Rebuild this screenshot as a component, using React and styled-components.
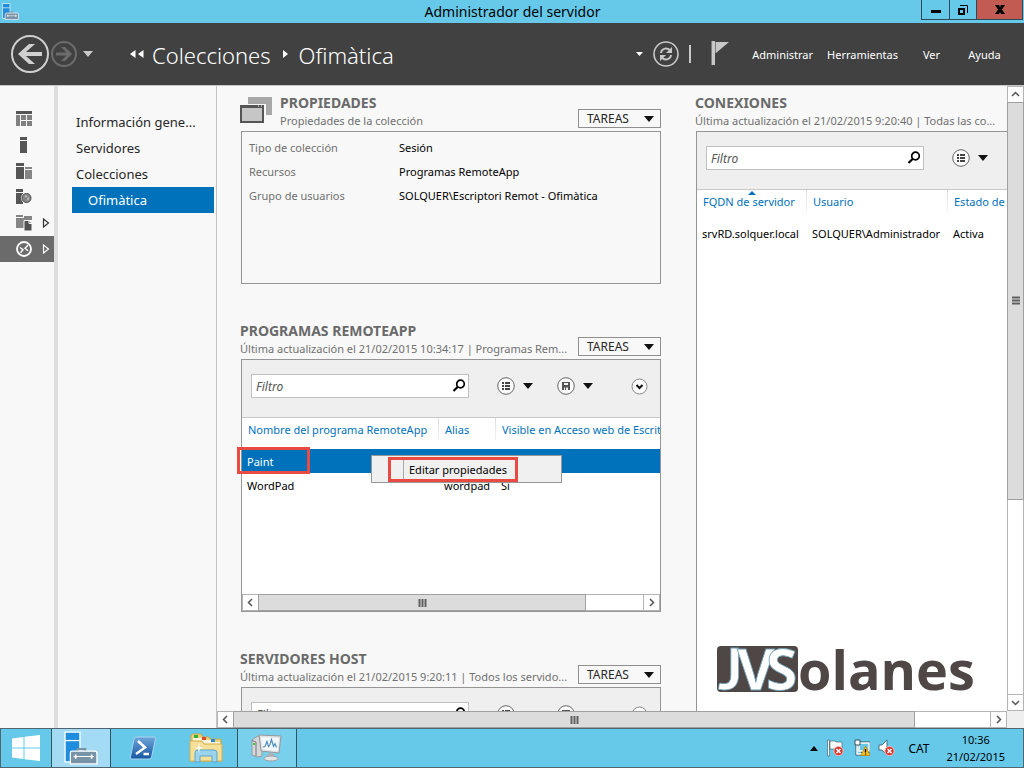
import { useState } from "react";
import styled, { createGlobalStyle, css } from "styled-components";

const GlobalStyle = createGlobalStyle`
    * {
        box-sizing: border-box;
    }
    body {
        margin: 0;
        font-family: "Noto Sans", "Open Sans", sans-serif;
        font-size: 11px;
        color: #000000;
    }
    button {
        margin: 0;
        padding: 0;
        border: none;
        background: none;
        font: inherit;
        color: inherit;
    }
    svg {
        display: block;
        flex-shrink: 0;
    }
`;

const Window = styled.div`
    display: flex;
    flex-direction: column;
    height: 100vh;
    overflow: hidden;
    background-color: #f8f8f8;
`;

/* title bar */
const TitleBar = styled.div`
    display: grid;
    grid-template-columns: 1fr auto 1fr;
    align-items: center;
    height: 23px;
    padding: 0 1px 0 2px;
    background-color: #66c9ea;
`;
const TitleText = styled.h1`
    margin: 0;
    font-size: 14px;
    font-weight: normal;
    line-height: 23px;
`;
const WindowButtons = styled.div`
    display: flex;
    justify-self: end;
    align-self: start;
    border: 1px solid #2f4a55;
    border-top: none;
`;
const WindowButton = styled.button`
    display: flex;
    align-items: center;
    justify-content: center;
    width: ${(props) => (props.$close ? "46px" : "27px")};
    height: 19px;
    background-color: ${(props) => (props.$close ? "#c25b52" : "transparent")};

    & + & {
        border-left: 1px solid #2f4a55;
    }
`;

/* dark header */
const Header = styled.header`
    display: flex;
    align-items: center;
    height: 63px;
    padding: 0 13px 0 11px;
    background-color: #414141;
    border-bottom: 1px solid #c8c8c8;
    color: white;
`;
const NavButtons = styled.div`
    display: flex;
    align-items: center;
    gap: 2px;
`;
const HistoryButton = styled.button`
    margin-left: 6px;
`;
const Breadcrumb = styled.nav`
    display: flex;
    align-items: center;
    gap: 8px;
    margin-left: 37px;
    flex: 1;
`;
const Crumb = styled.a`
    padding-top: 2px;
    color: white;
    font-size: 22px;
    font-weight: 300;
    line-height: 32px;
    text-decoration: none;
`;
const HeaderTools = styled.div`
    display: flex;
    align-items: center;
    gap: 10px;
    margin-right: 16px;
`;
const Divider = styled.span`
    width: 2px;
    height: 18px;
    background-color: #c8c8c8;
`;
const FlagButton = styled.button`
    margin-left: 10px;
`;
const MenuButton = styled.button`
    min-width: 53px;
    padding: 2px 7px 0;
    line-height: 24px;
    color: white;
`;

/* body */
const Body = styled.div`
    display: flex;
    flex: 1;
    min-height: 0;
`;
const Rail = styled.nav`
    flex: 0 0 58px;
    padding-top: 20px;
    border-right: 4px solid #dddddd;
`;
const RailButton = styled.button`
    display: flex;
    align-items: center;
    gap: 10px;
    width: 100%;
    height: 26px;
    padding-left: 16px;
    color: ${(props) => (props.$active ? "white" : "#333333")};
    background-color: ${(props) => (props.$active ? "#6b6b6b" : "transparent")};
`;
const SideMenu = styled.nav`
    flex: 0 0 159px;
    padding: 23px 2px 0 14px;
    border-right: 1px solid #c4c4c4;
`;
const SideLink = styled.a`
    display: block;
    height: 26px;
    padding-left: ${(props) => (props.$sub ? "16px" : "4px")};
    font-size: 13px;
    line-height: 26px;
    white-space: nowrap;
    text-decoration: none;
    color: ${(props) => (props.$active ? "white" : "#262626")};
    background-color: ${(props) => (props.$active ? "#0072bc" : "transparent")};
`;
const ScrollArea = styled.div`
    display: grid;
    grid-template-columns: minmax(0, 1fr) 17px;
    grid-template-rows: minmax(0, 1fr) 17px;
    flex: 1;
    min-width: 0;
`;
const Dashboard = styled.main`
    position: relative;
    display: grid;
    grid-template-columns: minmax(0, 421fr) minmax(0, 312fr);
    column-gap: 34px;
    min-height: 0;
    padding: 9px 0 0 23px;
    overflow: hidden;
`;
const Column = styled.div`
    display: flex;
    flex-direction: column;
    gap: 39px;
    min-height: 0;
`;
const Corner = styled.div`
    background-color: #efefef;
`;

/* tiles */
const Tile = styled.section`
    display: flex;
    flex-direction: column;
    flex: ${(props) => (props.$fill ? "1" : "none")};
`;
const TileHeader = styled.div`
    display: flex;
    height: 36px;
`;
const TileIcon = styled.div`
    width: 40px;
    padding-top: 2px;
`;
const TileNames = styled.div`
    flex: 1;
    min-width: 0;
    white-space: nowrap;
`;
const TileTitle = styled.h2`
    margin: 0;
    font-size: 14px;
    font-weight: 700;
    line-height: 16px;
    color: #6a6a6a;
`;
const TileSubtitle = styled.p`
    margin: 0;
    line-height: 20px;
    color: #707070;
`;
const TasksButton = styled.button`
    display: flex;
    align-items: center;
    justify-content: space-between;
    align-self: flex-end;
    width: 83px;
    height: 19px;
    margin-bottom: 3px;
    padding: 0 6px 0 8px;
    border: 1px solid #8f8f8f;
    background-color: #f8f8f8;
    color: #262626;
    font-size: 12px;
`;
const Panel = styled.div`
    position: relative;
    display: flex;
    flex-direction: column;
    flex: 1;
    min-height: ${(props) => (props.$tall ? "253px" : "153px")};
    margin-left: 1px;
    border: 1px solid #959595;
    background-color: ${(props) => (props.$plain ? "transparent" : "white")};
    ${(props) =>
        props.$open &&
        css`
            border-right: none;
            border-bottom: none;
        `}
`;
const Properties = styled.dl`
    display: grid;
    grid-template-columns: 150px 1fr;
    margin: 0;
    padding: 4px 7px;
    line-height: 24px;
`;
const Term = styled.dt`
    color: #707070;
`;
const Detail = styled.dd`
    margin: 0;
`;
const Toolbar = styled.div`
    display: flex;
    align-items: center;
    gap: 24px;
    height: 58px;
    padding: 0 12px 5px 9px;
    background-color: #efefef;
    border-bottom: 1px solid #c8c8c8;
`;
const FilterBox = styled.label`
    display: flex;
    align-items: center;
    flex: 0 0 218px;
    height: 24px;
    margin-right: 4px;
    padding-right: 2px;
    border: 1px solid #c0c0c0;
    background-color: white;
`;
const FilterInput = styled.input`
    flex: 1;
    min-width: 0;
    padding: 0 0 0 4px;
    border: none;
    outline: none;
    background: none;
    font: inherit;
    font-size: 12px;
    font-style: italic;

    &::placeholder {
        color: #555555;
        opacity: 1;
    }
`;
const ToolButton = styled.button`
    display: flex;
    align-items: center;
    gap: 8px;
    margin-left: ${(props) => (props.$last ? "auto" : "0")};
`;
const TableWrap = styled.div`
    flex: 1;
    overflow: hidden;
`;
const Table = styled.table`
    width: ${(props) => props.$width};
    table-layout: fixed;
    border-collapse: collapse;
`;
const Th = styled.th`
    position: relative;
    width: ${(props) => props.$width};
    height: 31px;
    padding: 3px 0 0 6px;
    font-weight: normal;
    line-height: 18px;
    text-align: left;
    vertical-align: top;
    white-space: nowrap;
    color: #0072bc;
    background: linear-gradient(#dcdcdc, #f4f4f4) right top / 1px 22px no-repeat;
`;
const SortMark = styled.svg`
    position: absolute;
    top: 1px;
    left: calc(50% - 4px);
`;
const Tr = styled.tr`
    height: 24px;
    color: ${(props) => (props.$active ? "white" : "black")};
    background-color: ${(props) => (props.$active ? "#0072bc" : "transparent")};
`;
const Td = styled.td`
    padding: 2px 0 0 5px;
    line-height: 22px;
    white-space: nowrap;
`;
const ContextMenu = styled.div`
    position: absolute;
    top: 95px;
    left: 129px;
    width: 191px;
    height: 28px;
    padding: 1px 0 1px 16px;
    border: 1px solid #979797;
    background-color: #f0f0f0;
`;
const MenuItem = styled.button`
    display: flex;
    align-items: center;
    width: 130px;
    height: 25px;
    padding-left: 12px;
    border: 3px solid #e94b43;
`;
const MenuItemText = styled.span`
    padding-left: 5px;
    border-left: 1px solid #a8a8a8;
    line-height: 19px;
    white-space: nowrap;
`;
const Highlight = styled.div`
    position: absolute;
    top: 87px;
    left: -5px;
    width: 73px;
    height: 27px;
    border: 3px solid #e94b43;
`;
const Brand = styled.svg`
    position: absolute;
    right: 30px;
    bottom: 14px;
`;

/* scroll bars */
const ScrollBar = styled.div`
    display: flex;
    flex-direction: ${(props) => (props.$vertical ? "column" : "row")};
    flex: none;
    min-width: 17px;
    min-height: 17px;
    border: 1px solid #b4b4b4;
    background-color: white;
`;
const ScrollButton = styled.button`
    display: flex;
    align-items: center;
    justify-content: center;
    flex: 0 0 15px;
`;
const Track = styled.div`
    display: flex;
    flex-direction: inherit;
    flex: 1;
    border: solid #b4b4b4;
    border-width: ${(props) => (props.$vertical ? "1px 0" : "0 1px")};
`;
const Thumb = styled.div`
    display: flex;
    align-items: center;
    justify-content: center;
    flex: 0 0 ${(props) => props.$size};
    outline: 1px solid #a0a0a0;
    background-color: #dcdcdc;
`;

/* task bar */
const TaskBar = styled.footer`
    display: flex;
    align-items: stretch;
    height: 40px;
    border: 1px solid #4f6670;
    background-color: #66c9ea;
`;
const TaskButton = styled.button`
    display: flex;
    align-items: center;
    justify-content: center;
    width: ${(props) => (props.$start ? "50px" : "63px")};
    ${(props) =>
        props.$open &&
        css`
            width: 60px;
            border: solid #33535f;
            border-width: 0 1px;
            background-color: ${props.$active ? "#a2dbf3" : "#78d0ed"};
        `}
`;
const Tray = styled.div`
    display: flex;
    align-items: center;
    gap: 8px;
    margin-left: auto;
    padding-right: 18px;
`;
const Language = styled.button`
    margin: 0 9px 0 5px;
    font-size: 12px;
`;
const Clock = styled.time`
    line-height: 17px;
    text-align: center;
`;

function Caret({ width = 10, height = 6, color = "#111111" }) {
    return (
        <svg width={width} height={height} viewBox="0 0 10 6" preserveAspectRatio="none" aria-hidden="true">
            <path d="M0 0h10L5 6z" fill={color} />
        </svg>
    );
}

function ServerLogo({ size }) {
    return (
        <svg width={size} height={size} viewBox="0 0 32 32" aria-hidden="true">
            <path d="M1 1h14v28H1z" fill="#1f8ddd" stroke="white" strokeWidth="1.2" />
            <path d="M1 9h14" stroke="white" strokeWidth="1.2" />
            <path d="M13 19v-2h7v2" fill="none" stroke="#7892a6" strokeWidth="2" />
            <path d="M7 19h22q2 0 2 2v10H6V21q0-2 1-2z" fill="#7892a6" stroke="white" strokeWidth="1.2" />
            <path d="M9 24h19" stroke="white" strokeWidth="1" />
            <path d="M11 22v4M26 22v4" stroke="white" strokeWidth="1.600" />
        </svg>
    );
}

function Chevron({ direction }) {
    const angle = { left: 0, up: 90, right: 180, down: 270 }[direction];
    return (
        <svg width="9" height="9" viewBox="0 0 9 9" aria-hidden="true">
            <path d="M6 1 2.5 4.5 6 8" fill="none" stroke="#555555" strokeWidth="1.5" transform={`rotate(${angle} 4.5 4.5)`} />
        </svg>
    );
}

function Grip({ vertical }) {
    return (
        <svg width="9" height="9" viewBox="0 0 9 9" aria-hidden="true">
            <path d={vertical ? "M1 1.5h8M1 4.5h8M1 7.5h8" : "M1.5 1v8M4.5 1v8M7.5 1v8"} stroke="#606060" strokeWidth="2" />
        </svg>
    );
}

function Scroller({ vertical, size }) {
    return (
        <ScrollBar $vertical={vertical}>
            <ScrollButton aria-label={vertical ? "Subir" : "Izquierda"}>
                <Chevron direction={vertical ? "up" : "left"} />
            </ScrollButton>
            <Track $vertical={vertical}>
                <Thumb $size={size}>
                    <Grip vertical={vertical} />
                </Thumb>
            </Track>
            <ScrollButton aria-label={vertical ? "Bajar" : "Derecha"}>
                <Chevron direction={vertical ? "down" : "right"} />
            </ScrollButton>
        </ScrollBar>
    );
}

function ListIcon() {
    return (
        <svg width="18" height="18" viewBox="0 0 18 18" aria-hidden="true">
            <circle cx="9" cy="9" r="8.3" fill="#fafafa" stroke="#666666" />
            <path d="M5 6h2M8 6h5M5 9h2M8 9h5M5 12h2M8 12h5" stroke="#444444" strokeWidth="1.8" />
        </svg>
    );
}

function SaveIcon() {
    return (
        <svg width="18" height="18" viewBox="0 0 18 18" aria-hidden="true">
            <circle cx="9" cy="9" r="8.3" fill="#fafafa" stroke="#666666" />
            <path d="M5 5h8v8H5z" fill="#555555" />
            <path d="M7 6h4v2H7zM7 10.5h1V13H7zM9 10.5h2V13H9z" fill="#f4f4f4" />
        </svg>
    );
}

function ExpandIcon() {
    return (
        <svg width="17" height="17" viewBox="0 0 17 17" aria-hidden="true">
            <circle cx="8.5" cy="8.5" r="7.5" fill="#fafafa" stroke="#888888" />
            <path d="m5.500 7 3 3 3-3" fill="none" stroke="#111111" strokeWidth="2" />
        </svg>
    );
}

function SearchIcon() {
    return (
        <svg width="14" height="14" viewBox="0 0 14 14" aria-hidden="true">
            <circle cx="8.5" cy="5" r="3.8" fill="none" stroke="black" strokeWidth="1.7" />
            <path d="M5.800 7.800 1.500 12" stroke="black" strokeWidth="2.2" />
        </svg>
    );
}

function RailIcon({ name }) {
    return (
        <svg width="16" height="16" viewBox="0 0 16 16" aria-hidden="true">
            {name === "panel" && (
                <>
                    <path d="M0 0h16v3H0z" fill="#555555" />
                    <path d="M0 4h4v11H0zM5 4h5v5H5zM11 4h5v5h-5zM5 10h5v5H5zM11 10h5v5h-5z" fill="#808080" />
                </>
            )}
            {name === "local" && <path d="M4 0h7v3H4zM4 4h7v12H4z" fill="#555555" />}
            {name === "all" && (
                <>
                    <path d="M0 0h8v3H0zM0 4h8v12H0z" fill="#555555" />
                    <path d="M9 4h7v2H9zM9 7h7v9H9z" fill="#858585" />
                </>
            )}
            {name === "iis" && (
                <>
                    <path d="M0 0h7v3H0zM0 4h7v11H0z" fill="#555555" />
                    <circle cx="10.5" cy="9" r="5.5" fill="#f8f8f8" />
                    <circle cx="10.5" cy="9" r="4.5" fill="#858585" stroke="#505050" />
                    <path d="m8 7 2.500-1 1 1-1.500 1.500zM11 9l2-1v2.500L11.500 12z" fill="#b8b8b8" />
                </>
            )}
            {name === "files" && (
                <>
                    <path d="M0 0h7v2H0zM0 3h8v10H0zM8 1h8v4H8z" fill="#858585" />
                    <path d="M8 5.500h5l3 3V16H8z" fill="#505050" stroke="#f8f8f8" />
                    <path d="M13 5.500v3h3" fill="none" stroke="#f8f8f8" />
                </>
            )}
            {name === "remote" && (
                <>
                    <circle cx="8" cy="8" r="7" fill="none" stroke="white" strokeWidth="1.8" />
                    <path d="m4 6.500 3 2.200-2.500 3M12 4.200 9 7.200l3 2.500" fill="none" stroke="white" strokeWidth="1.4" />
                </>
            )}
        </svg>
    );
}

function Arrow() {
    return (
        <svg width="8" height="10" viewBox="0 0 8 10" aria-hidden="true">
            <path d="M1.500 1 6.500 5l-5 4z" fill="none" stroke="currentColor" strokeWidth="1.2" />
        </svg>
    );
}

function Tasks() {
    return (
        <TasksButton>
            TAREAS
            <Caret />
        </TasksButton>
    );
}

function FilterBar({ full }) {
    const [filter, setFilter] = useState("");

    return (
        <Toolbar>
            <FilterBox>
                <FilterInput
                    type="text"
                    placeholder="Filtro"
                    aria-label="Filtro"
                    value={filter}
                    onChange={(e) => setFilter(e.target.value)}
                />
                <SearchIcon />
            </FilterBox>
            <ToolButton aria-label="Vista">
                <ListIcon />
                <Caret />
            </ToolButton>
            {full && (
                <>
                    <ToolButton aria-label="Guardar">
                        <SaveIcon />
                        <Caret />
                    </ToolButton>
                    <ToolButton $last aria-label="Expandir">
                        <ExpandIcon />
                    </ToolButton>
                </>
            )}
        </Toolbar>
    );
}

const railItems = ["panel", "local", "all", "iis", "files", "remote"];
const railLabels = {
    panel: "Panel",
    local: "Servidor local",
    all: "Todos los servidores",
    iis: "IIS",
    files: "Servicios de archivos",
    remote: "Servicios de Escritorio remoto",
};

function App() {
    const [section, setSection] = useState("remote");

    return (
        <Window>
            <GlobalStyle />
            <TitleBar>
                <ServerLogo size={17} />
                <TitleText>Administrador del servidor</TitleText>
                <WindowButtons>
                    <WindowButton aria-label="Minimizar">
                        <svg width="10" height="10" viewBox="0 0 10 10">
                            <path d="M0 5h10v3H0z" />
                        </svg>
                    </WindowButton>
                    <WindowButton aria-label="Restaurar">
                        <svg width="10" height="10" viewBox="0 0 10 10">
                            <path d="M1 4h5v5H1z" fill="none" stroke="black" strokeWidth="2" />
                            <path d="M2 .5h7.500V8" fill="none" stroke="black" />
                        </svg>
                    </WindowButton>
                    <WindowButton $close aria-label="Cerrar">
                        <svg width="10" height="9" viewBox="0 0 10 9">
                            <path d="M0 0h4l1 2 1-2h4L7 4.500 10 9H6L5 7 4 9H0l3-4.500z" />
                        </svg>
                    </WindowButton>
                </WindowButtons>
            </TitleBar>

            <Header>
                <NavButtons>
                    <button aria-label="Atrás">
                        <svg width="38" height="38" viewBox="0 0 38 38">
                            <circle cx="19" cy="19" r="18" fill="none" stroke="#d0d0d0" strokeWidth="2" />
                            <path d="M7 19 18 9h6l-9 8h16v4H15l9 8h-6z" fill="#d0d0d0" />
                        </svg>
                    </button>
                    <button aria-label="Adelante">
                        <svg width="26" height="26" viewBox="0 0 26 26">
                            <circle cx="13" cy="13" r="12" fill="none" stroke="#6c6c6c" strokeWidth="2" />
                            <path d="m21 13-7-7h-4l5.500 5.500H5v3h10.500L10 20h4z" fill="#6c6c6c" />
                        </svg>
                    </button>
                </NavButtons>
                <HistoryButton aria-label="Historial">
                    <Caret color="#c8c8c8" />
                </HistoryButton>
                <Breadcrumb>
                    <svg width="14" height="8" viewBox="0 0 14 8" aria-hidden="true">
                        <path d="M5.500 0v8L0 4zM13.500 0v8L8 4z" fill="white" />
                    </svg>
                    <Crumb href="#">Colecciones</Crumb>
                    <svg width="12" height="8" viewBox="0 0 12 8" aria-hidden="true">
                        <path d="M4 0v8l5-4z" fill="white" />
                    </svg>
                    <Crumb href="#">Ofimàtica</Crumb>
                </Breadcrumb>
                <HeaderTools>
                    <Caret width={7} height={4} color="white" />
                    <button aria-label="Actualizar">
                        <svg width="26" height="26" viewBox="0 0 26 26">
                            <circle cx="13" cy="13" r="12" fill="none" stroke="#c8c8c8" strokeWidth="1.6" />
                            <path d="M8 12c.5-5 7-6 9.500-2M18 14c-.5 5-7 6-9.500 2" fill="none" stroke="#c8c8c8" strokeWidth="2" />
                            <path d="M19 6v6h-6zM7 20v-6h6z" fill="#c8c8c8" />
                        </svg>
                    </button>
                    <Divider />
                    <FlagButton aria-label="Notificaciones">
                        <svg width="18" height="30" viewBox="0 0 18 30">
                            <path d="M1 2h3v24H1zM5 3h13L5 14z" fill="#c8c8c8" />
                            <path d="M.5 2v24M4.500 3v11" stroke="#7d7d7d" />
                        </svg>
                    </FlagButton>
                </HeaderTools>
                <MenuButton>Administrar</MenuButton>
                <MenuButton>Herramientas</MenuButton>
                <MenuButton>Ver</MenuButton>
                <MenuButton>Ayuda</MenuButton>
            </Header>

            <Body>
                <Rail>
                    {railItems.map((name) => (
                        <RailButton
                            key={name}
                            $active={name === section}
                            aria-label={railLabels[name]}
                            onClick={() => setSection(name)}
                        >
                            <RailIcon name={name} />
                            {(name === "files" || name === "remote") && <Arrow />}
                        </RailButton>
                    ))}
                </Rail>
                <SideMenu>
                    <SideLink href="#">Información gene...</SideLink>
                    <SideLink href="#">Servidores</SideLink>
                    <SideLink href="#">Colecciones</SideLink>
                    <SideLink href="#" $sub $active>Ofimàtica</SideLink>
                </SideMenu>
                <ScrollArea>
                    <Dashboard>
                        <Column>
                            <Tile>
                                <TileHeader>
                                    <TileIcon>
                                        <svg width="32" height="28" viewBox="0 0 32 28" aria-hidden="true">
                                            <path d="M8 0h24v18H8z" fill="#a8a8a8" />
                                            <path d="M0 7h26v21H0z" fill="#f8f8f8" />
                                            <path d="M1 10h22v15H1z" fill="#c6c6c6" stroke="#555555" strokeWidth="2" />
                                            <path d="M0 8h24v3H0z" fill="#555555" />
                                            <path d="M18 9h1M21 9h1" stroke="white" />
                                        </svg>
                                    </TileIcon>
                                    <TileNames>
                                        <TileTitle>PROPIEDADES</TileTitle>
                                        <TileSubtitle>Propiedades de la colección</TileSubtitle>
                                    </TileNames>
                                    <Tasks />
                                </TileHeader>
                                <Panel $plain>
                                    <Properties>
                                        <Term>Tipo de colección</Term>
                                        <Detail>Sesión</Detail>
                                        <Term>Recursos</Term>
                                        <Detail>Programas RemoteApp</Detail>
                                        <Term>Grupo de usuarios</Term>
                                        <Detail>SOLQUER\Escriptori Remot - Ofimàtica</Detail>
                                    </Properties>
                                </Panel>
                            </Tile>

                            <Tile>
                                <TileHeader>
                                    <TileNames>
                                        <TileTitle>PROGRAMAS REMOTEAPP</TileTitle>
                                        <TileSubtitle>Última actualización el 21/02/2015 10:34:17 | Programas Rem...</TileSubtitle>
                                    </TileNames>
                                    <Tasks />
                                </TileHeader>
                                <Panel $tall>
                                    <FilterBar full />
                                    <TableWrap>
                                        <Table $width="494px">
                                            <thead>
                                                <tr>
                                                    <Th $width="197px">Nombre del programa RemoteApp</Th>
                                                    <Th $width="57px">Alias</Th>
                                                    <Th>Visible en Acceso web de Escritorio remoto</Th>
                                                </tr>
                                            </thead>
                                            <tbody>
                                                <Tr $active>
                                                    <Td>Paint</Td>
                                                    <Td></Td>
                                                    <Td></Td>
                                                </Tr>
                                                <Tr>
                                                    <Td>WordPad</Td>
                                                    <Td>wordpad</Td>
                                                    <Td>Sí</Td>
                                                </Tr>
                                            </tbody>
                                        </Table>
                                    </TableWrap>
                                    <Scroller size="85%" />
                                    <Highlight />
                                    <ContextMenu>
                                        <MenuItem>
                                            <MenuItemText>Editar propiedades</MenuItemText>
                                        </MenuItem>
                                    </ContextMenu>
                                </Panel>
                            </Tile>

                            <Tile>
                                <TileHeader>
                                    <TileNames>
                                        <TileTitle>SERVIDORES HOST</TileTitle>
                                        <TileSubtitle>Última actualización el 21/02/2015 9:20:11 | Todos los servido...</TileSubtitle>
                                    </TileNames>
                                    <Tasks />
                                </TileHeader>
                                <Panel $tall>
                                    <FilterBar full />
                                </Panel>
                            </Tile>
                        </Column>

                        <Column>
                            <Tile $fill>
                                <TileHeader>
                                    <TileNames>
                                        <TileTitle>CONEXIONES</TileTitle>
                                        <TileSubtitle>Última actualización el 21/02/2015 9:20:40 | Todas las co...</TileSubtitle>
                                    </TileNames>
                                </TileHeader>
                                <Panel $open>
                                    <FilterBar />
                                    <TableWrap>
                                        <Table $width="364px">
                                            <thead>
                                                <tr>
                                                    <Th $width="110px">
                                                        FQDN de servidor
                                                        <SortMark width="8" height="4" viewBox="0 0 8 4">
                                                            <path d="M0 4h8L4 0z" fill="#0072bc" />
                                                        </SortMark>
                                                    </Th>
                                                    <Th $width="141px">Usuario</Th>
                                                    <Th>Estado de sesión</Th>
                                                </tr>
                                            </thead>
                                            <tbody>
                                                <Tr>
                                                    <Td>srvRD.solquer.local</Td>
                                                    <Td>SOLQUER\Administrador</Td>
                                                    <Td>Activa</Td>
                                                </Tr>
                                            </tbody>
                                        </Table>
                                    </TableWrap>
                                </Panel>
                            </Tile>
                        </Column>

                        <Brand width="260" height="56" viewBox="0 0 260 56" fontFamily="Open Sans, sans-serif" fontWeight="700">
                            <rect x="0" y="5" width="81" height="46" rx="4" fill="#4f4745" />
                            <g fill="white" stroke="#6f9fb5" strokeWidth=".8">
                                <text x="1" y="49" fontSize="58" fontFamily="Lato, sans-serif">J</text>
                                <text x="20" y="49" fontSize="58">V</text>
                                <text x="49" y="49" fontSize="57">S</text>
                            </g>
                            <text x="81" y="49" fontSize="54" fill="#4f4745">olanes</text>
                        </Brand>
                    </Dashboard>
                    <Scroller vertical size="67%" />
                    <Scroller size="90%" />
                    <Corner />
                </ScrollArea>
            </Body>

            <TaskBar>
                <TaskButton $start aria-label="Inicio">
                    <svg width="28" height="26" viewBox="0 0 28 26">
                        <path d="M0 3.500 11.500 2v10.500H0zM12.500 1.800 28 0v12.500H12.500zM0 13.500h11.500V24L0 22.500zM12.500 13.500H28V26l-15.500-1.800z" fill="white" />
                    </svg>
                </TaskButton>
                <TaskButton $open $active aria-label="Administrador del servidor">
                    <ServerLogo size={34} />
                </TaskButton>
                <TaskButton aria-label="PowerShell">
                    <svg width="28" height="24" viewBox="0 0 28 24">
                        <defs>
                            <linearGradient id="shell" x1="0" y1="0" x2="0" y2="1">
                                <stop offset="0" stopColor="#6fa8da" />
                                <stop offset="1" stopColor="#1554a0" />
                            </linearGradient>
                        </defs>
                        <path d="M7 1h18q2 0 1.500 2l-4 18q-.5 2-2.500 2H3q-2 0-1.500-2l3.500-18q.5-2 2-2z" fill="url(#shell)" stroke="#a8d4f0" />
                        <path d="m9 5 7 6.500L7 18M14.500 18H20" fill="none" stroke="white" strokeWidth="2.5" />
                    </svg>
                </TaskButton>
                <TaskButton aria-label="Explorador de archivos">
                    <svg width="34" height="30" viewBox="0 0 34 30">
                        <path d="M2 3q0-2 2-2h8l2 3h6l1 2h10q1 0 1 2v20H2z" fill="#ecd07a" stroke="#cba748" />
                        <path d="M4 5h9l2 2h7l1 2h8v3H4z" fill="#fdf6dc" />
                        <path d="M5 2h4v3H5z" fill="#2fae3b" />
                        <path d="M13 4h4v3h-4z" fill="#d6452c" />
                        <path d="M22 6h4v3h-4z" fill="#2b8ad6" />
                        <path d="M1 8h12l2 3h18v17H1z" fill="#f5e09a" stroke="#d3ad4c" />
                        <path d="M6 29v-9q0-3 3-3h16q3 0 3 3v9h-5v-6H11v6z" fill="#9cd4ec" stroke="#5aa5cb" />
                        <path d="m10 10 1 4 4 1-4 1-1 4-1-4-4-1 4-1z" fill="white" opacity=".8" />
                    </svg>
                </TaskButton>
                <TaskButton $open aria-label="Monitor de rendimiento">
                    <svg width="32" height="28" viewBox="0 0 32 28">
                        <path d="m1 6 6-4 4 1v19l-5 1-5-2z" fill="#d5d8da" stroke="#979b9e" />
                        <path d="M1 6.500 5 8v14" fill="none" stroke="#777777" />
                        <path d="M2 9h2v2H2z" fill="#3ec83a" />
                        <path d="m8 1 22 1-2 17-18-2z" fill="#dfe1e2" stroke="#95999c" />
                        <path d="m10 3 18 1-1.500 13L12 15.500z" fill="#f2f9fd" />
                        <path d="m12 13 2-.5 2-5 1.500 5 1.500-2 1.500-5 2 7 1.500-3 1.500 4" fill="none" stroke="#4a86b8" strokeWidth="1.1" />
                        <path d="m17 19 6 .5v4h-6z" fill="#b0b4b7" />
                        <ellipse cx="20" cy="24.5" rx="7" ry="2.5" fill="#e2e4e5" stroke="#a0a0a0" />
                    </svg>
                </TaskButton>
                <Tray>
                    <button aria-label="Mostrar iconos ocultos">
                        <svg width="8" height="5" viewBox="0 0 8 5">
                            <path d="M0 5h8L4 0z" />
                        </svg>
                    </button>
                    <svg width="20" height="18" viewBox="4 0 20 18" aria-hidden="true">
                        <path d="M8 2h5l1 1h6v8h-6l-1-1H8zM5.500 1h2v16h-2z" fill="white" stroke="#34535f" strokeWidth=".6" />
                        <circle cx="16.5" cy="12" r="4.6" fill="#d9332c" stroke="#f5bab4" />
                        <path d="m14.500 10 4 4M18.500 10l-4 4" stroke="white" strokeWidth="1.6" />
                    </svg>
                    <svg width="16" height="18" viewBox="0 0 16 18" aria-hidden="true">
                        <path d="M5 4h10v8H5zM3 6v9h5" fill="none" stroke="#34535f" strokeWidth="3" />
                        <path d="M5 4h10v8H5zM3 6v9h5" fill="#66c9ea" stroke="white" strokeWidth="1.5" />
                        <path d="M1 1h5v5H1z" fill="white" stroke="#34535f" />
                        <path d="m11.500 7 4.500 9.500H7z" fill="#fcc419" stroke="#b57a00" strokeWidth=".7" />
                        <path d="M11.500 10v3.500M11.500 14.500v1" stroke="black" strokeWidth="1.3" />
                    </svg>
                    <svg width="17" height="18" viewBox="0 0 17 18" aria-hidden="true">
                        <path d="M1 6h3l5-5v15l-5-5H1z" fill="white" stroke="#34535f" strokeWidth=".8" />
                        <circle cx="11.5" cy="12" r="4.6" fill="#d9332c" stroke="#f5bab4" />
                        <path d="m9.500 10 4 4M13.500 10l-4 4" stroke="white" strokeWidth="1.6" />
                    </svg>
                    <Language>CAT</Language>
                    <Clock>
                        10:36
                        <br />
                        21/02/2015
                    </Clock>
                </Tray>
            </TaskBar>
        </Window>
    );
}

export default App;
